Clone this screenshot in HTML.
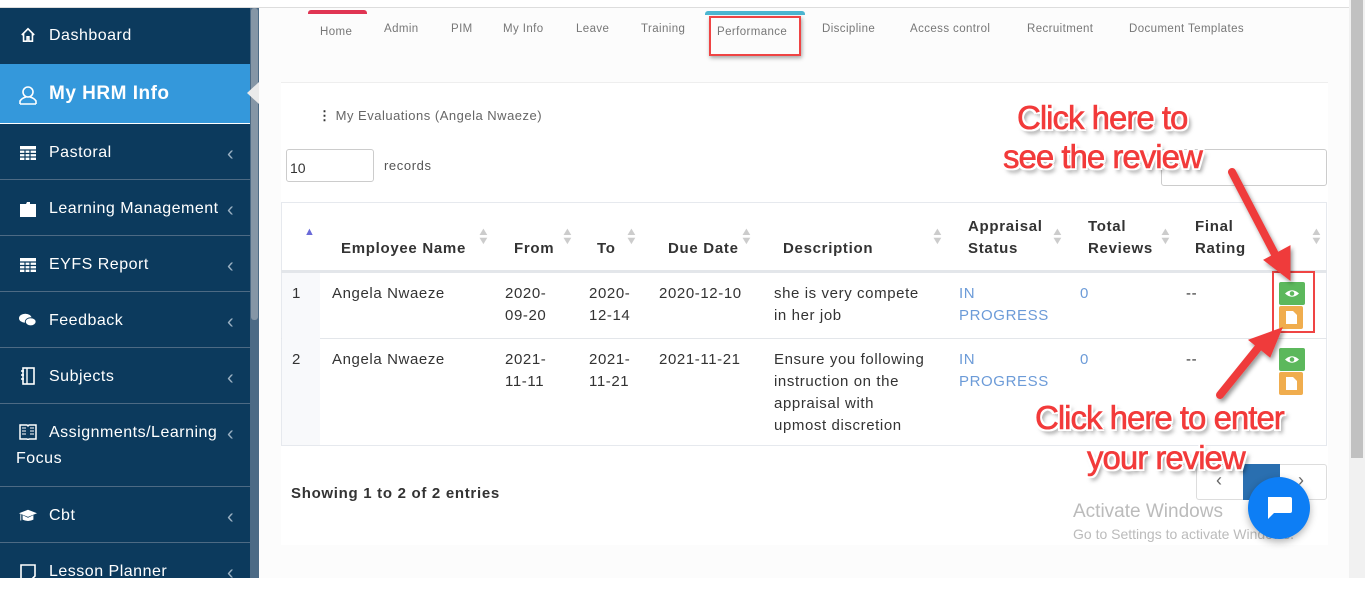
<!DOCTYPE html>
<html><head><meta charset="utf-8"><style>
*{box-sizing:border-box;margin:0;padding:0}
body{width:1365px;height:578px;overflow:hidden;background:#fff;font-family:"Liberation Sans",sans-serif;position:relative;color:#333}
.abs{position:absolute}
#sb{left:0;top:8px;width:259px;height:570px;background:#0c3a5d}
.it{position:absolute;left:0;width:250px;color:#fff;font-size:16px;letter-spacing:.5px;border-bottom:1px solid #4d6a84}
.it .ic{position:absolute;left:19px;width:18px;height:16px}
.it .t{position:absolute;left:49px}
.it .ch{position:absolute;left:227px;color:#9bb0c2;font-size:20px;line-height:16px}
.nav{font-size:11.5px;color:#777;letter-spacing:.4px;top:23px}
.h{font-weight:bold;font-size:15px;color:#333;letter-spacing:.7px;line-height:22px}
.c{font-size:15px;color:#333;letter-spacing:.6px;line-height:22px}
.sort{color:#ccc;font-size:11px;line-height:9px;transform:scaleX(1.2)}
.ann{font-size:33px;color:#f23a3a;font-family:"Liberation Sans",sans-serif;letter-spacing:-1px;-webkit-text-stroke:0.6px #f23a3a;text-shadow:-2px -2px 0 #fff,2px -2px 0 #fff,-2px 2px 0 #fff,2px 2px 0 #fff,0 2px 0 #fff,2px 0 0 #fff,-2px 0 0 #fff,0 -2px 0 #fff,3px 4px 4px rgba(0,0,0,.5);white-space:nowrap}
.blue{color:#6c9bd8}
</style></head><body>
<div class="abs" style="left:0;top:0;width:1350px;height:8px;background:#fff;border-bottom:1px solid #ddd"></div>
<div class="abs" style="left:259px;top:8px;width:1091px;height:570px;background:#fcfcfc"></div>
<div class="abs" style="left:1349px;top:0;width:16px;height:578px;background:#f1f1f1"></div>
<div class="abs" style="left:1351px;top:0;width:12px;height:458px;background:#c1c1c1"></div>

<div id="sb" class="abs">
<div class="it" style="top:0;height:56px;border:none"><svg class="ic" style="top:19px" viewBox="0 0 18 18"><path d="M2 9 L9 2 L16 9 M4 7 V16 H8 V11 H10 V16 H14 V7" fill="none" stroke="#fff" stroke-width="1.8"/></svg><span class="t" style="top:19px">Dashboard</span></div>
<div class="it" style="top:56px;height:60px;background:#3498db;border-bottom:1px solid #fff;width:250px"><svg class="ic" style="top:21px;height:20px" viewBox="0 0 18 20"><circle cx="9" cy="7" r="5" fill="none" stroke="#fff" stroke-width="1.6"/><path d="M1 19 V16 Q3 13 7 12 M17 19 V16 Q15 13 11 12 M1 19 H17" fill="none" stroke="#fff" stroke-width="1.6"/></svg><span class="t" style="top:19px;font-weight:bold;font-size:19px">My HRM Info</span></div>
<div class="it" style="top:116px;height:56px"><svg class="ic" style="top:21px" viewBox="0 0 18 16"><rect x="1" y="1" width="16" height="14" fill="#fff"/><path d="M1 5H17M1 8.5H17M1 12H17M6 5V15M11 5V15" stroke="#0c3a5d" stroke-width="1.2"/></svg><span class="t" style="top:20px">Pastoral</span><span class="ch" style="top:22px">‹</span></div>
<div class="it" style="top:172px;height:56px"><svg class="ic" style="top:21px" viewBox="0 0 18 16"><path d="M1 3H7L8 1H11V3H17V16H1Z" fill="#fff"/></svg><span class="t" style="top:20px">Learning Management</span><span class="ch" style="top:22px">‹</span></div>
<div class="it" style="top:228px;height:56px"><svg class="ic" style="top:21px" viewBox="0 0 18 16"><rect x="1" y="1" width="16" height="14" fill="#fff"/><path d="M1 5H17M1 8.5H17M1 12H17M6 5V15M11 5V15" stroke="#0c3a5d" stroke-width="1.2"/></svg><span class="t" style="top:20px">EYFS Report</span><span class="ch" style="top:22px">‹</span></div>
<div class="it" style="top:284px;height:56px"><svg class="ic" style="top:20px" viewBox="0 0 20 16"><ellipse cx="7" cy="6" rx="7" ry="5" fill="#fff"/><ellipse cx="13" cy="10" rx="6" ry="4.5" fill="#fff" stroke="#0c3a5d"/></svg><span class="t" style="top:20px">Feedback</span><span class="ch" style="top:22px">‹</span></div>
<div class="it" style="top:340px;height:56px"><svg class="ic" style="top:19px;height:18px" viewBox="0 0 18 18"><rect x="4" y="1" width="11" height="16" fill="none" stroke="#fff" stroke-width="1.6"/><path d="M8 1V17M2 4H5M2 8H5M2 12H5" stroke="#fff" stroke-width="1.4"/></svg><span class="t" style="top:20px">Subjects</span><span class="ch" style="top:22px">‹</span></div>
<div class="it" style="top:396px;height:83px"><svg class="ic" style="top:20px" viewBox="0 0 18 16"><path d="M1 1H8L9 2L10 1H17V15H10L9 16L8 15H1Z" fill="none" stroke="#fff" stroke-width="1.5"/><path d="M3 4H7M3 7H7M3 10H7M11 4H15M11 7H15M11 10H15" stroke="#fff"/></svg><span class="t" style="top:20px">Assignments/Learning</span><span class="ch" style="top:22px">‹</span><span class="abs" style="left:16px;top:46px">Focus</span></div>
<div class="it" style="top:479px;height:56px"><svg class="ic" style="top:21px" viewBox="0 0 20 16"><path d="M0 5L10 1L20 5L10 9Z" fill="#fff"/><path d="M4 7V12Q10 15 16 12V7L10 10Z" fill="#fff"/><path d="M2 6V13" stroke="#fff"/></svg><span class="t" style="top:20px">Cbt</span><span class="ch" style="top:22px">‹</span></div>
<div class="it" style="top:535px;height:56px;border:none"><svg class="ic" style="top:21px" viewBox="0 0 18 16"><path d="M2 1H16V12L12 16H2Z" fill="none" stroke="#fff" stroke-width="1.6"/></svg><span class="t" style="top:20px">Lesson Planner</span><span class="ch" style="top:22px">‹</span></div>
<div class="abs" style="left:250px;top:0;width:9px;height:570px;background:#4c6a85"></div>
<div class="abs" style="left:251px;top:0;width:7px;height:312px;background:#8596a6;border-radius:3px"></div>
<div class="abs" style="left:247px;top:74px;width:0;height:0;border-top:11px solid transparent;border-bottom:11px solid transparent;border-right:12px solid #eaeaea"></div>
</div>

<div class="abs" style="left:308px;top:10px;width:59px;height:4px;background:#e03553;border-radius:3px 3px 0 0"></div>
<div class="abs" style="left:705px;top:11px;width:100px;height:4px;background:#4cb6d1;border-radius:3px 3px 0 0"></div>
<span class="abs nav" style="left:320px;top:26px">Home</span>
<span class="abs nav" style="left:384px">Admin</span>
<span class="abs nav" style="left:451px">PIM</span>
<span class="abs nav" style="left:503px">My Info</span>
<span class="abs nav" style="left:576px">Leave</span>
<span class="abs nav" style="left:641px">Training</span>
<span class="abs nav" style="left:717px;top:26px">Performance</span>
<span class="abs nav" style="left:822px">Discipline</span>
<span class="abs nav" style="left:910px">Access control</span>
<span class="abs nav" style="left:1027px">Recruitment</span>
<span class="abs nav" style="left:1129px">Document Templates</span>
<div class="abs" style="left:709px;top:16px;width:92px;height:40px;border:2px solid #ef4444;box-shadow:1px 2px 4px rgba(0,0,0,.35)"></div>

<div class="abs" style="left:281px;top:82px;width:1047px;height:463px;background:#fff;border-top:1px solid #eee"></div>
<span class="abs" style="left:318px;top:108px;font-size:13px;color:#666;letter-spacing:.5px"><b style="color:#333">⋮</b> My Evaluations (Angela Nwaeze)</span>
<div class="abs" style="left:286px;top:149px;width:88px;height:33px;border:1px solid #ccc;border-radius:3px;font-size:14px;padding:10px 3px">10</div>
<span class="abs" style="left:384px;top:158px;font-size:13px;color:#555;letter-spacing:.6px">records</span>
<div class="abs" style="left:1161px;top:149px;width:166px;height:37px;border:1px solid #ccc;border-radius:3px"></div>

<div class="abs" style="left:281px;top:202px;width:1046px;height:244px;border:1px solid #e6e9ee"></div>
<div class="abs" style="left:281px;top:270px;width:1046px;height:3px;background:#e3e6ea"></div>
<div class="abs" style="left:281px;top:338px;width:1046px;height:1px;background:#e3e6ea"></div>
<div class="abs" style="left:282px;top:273px;width:38px;height:172px;background:#f8f9fb"></div>
<span class="abs" style="left:304px;top:226px;color:#6a6ad8;font-size:11px">▲</span>
<span class="abs h" style="left:341px;top:238px">Employee Name</span>
<span class="abs h" style="left:514px;top:238px">From</span>
<span class="abs h" style="left:597px;top:238px">To</span>
<span class="abs h" style="left:668px;top:238px">Due Date</span>
<span class="abs h" style="left:783px;top:238px">Description</span>
<span class="abs h" style="left:968px;top:216px">Appraisal<br>Status</span>
<span class="abs h" style="left:1088px;top:216px">Total<br>Reviews</span>
<span class="abs h" style="left:1195px;top:216px">Final<br>Rating</span>
<span class="abs sort" style="left:478px;top:228px">▲<br>▼</span>
<span class="abs sort" style="left:562px;top:228px">▲<br>▼</span>
<span class="abs sort" style="left:626px;top:228px">▲<br>▼</span>
<span class="abs sort" style="left:741px;top:228px">▲<br>▼</span>
<span class="abs sort" style="left:932px;top:228px">▲<br>▼</span>
<span class="abs sort" style="left:1052px;top:228px">▲<br>▼</span>
<span class="abs sort" style="left:1160px;top:228px">▲<br>▼</span>
<span class="abs sort" style="left:1311px;top:228px">▲<br>▼</span>

<span class="abs c" style="left:292px;top:283px">1</span>
<span class="abs c" style="left:332px;top:283px">Angela Nwaeze</span>
<span class="abs c" style="left:505px;top:283px">2020-<br>09-20</span>
<span class="abs c" style="left:589px;top:283px">2020-<br>12-14</span>
<span class="abs c" style="left:659px;top:283px">2020-12-10</span>
<span class="abs c" style="left:774px;top:283px">she is very compete<br>in her job</span>
<span class="abs c blue" style="left:959px;top:283px">IN<br>PROGRESS</span>
<span class="abs c blue" style="left:1080px;top:283px">0</span>
<span class="abs c" style="left:1186px;top:283px">--</span>

<span class="abs c" style="left:292px;top:349px">2</span>
<span class="abs c" style="left:332px;top:349px">Angela Nwaeze</span>
<span class="abs c" style="left:505px;top:349px">2021-<br>11-11</span>
<span class="abs c" style="left:589px;top:349px">2021-<br>11-21</span>
<span class="abs c" style="left:659px;top:349px">2021-11-21</span>
<span class="abs c" style="left:774px;top:349px">Ensure you following<br>instruction on the<br>appraisal with<br>upmost discretion</span>
<span class="abs c blue" style="left:959px;top:349px">IN<br>PROGRESS</span>
<span class="abs c blue" style="left:1080px;top:349px">0</span>
<span class="abs c" style="left:1186px;top:349px">--</span>

<div class="abs" style="left:1279px;top:282px;width:26px;height:23px;background:#5cb85c;border-radius:2px"><svg width="26" height="23" viewBox="0 0 26 23"><path d="M6 11.5Q13 5 20 11.5Q13 18 6 11.5Z" fill="#fff"/><circle cx="13" cy="11.5" r="2.3" fill="#5cb85c"/></svg></div>
<div class="abs" style="left:1279px;top:306px;width:24px;height:23px;background:#f0ad4e;border-radius:2px"><svg width="24" height="23" viewBox="0 0 24 23"><path d="M7 5H14L18 9V18H7Z" fill="#fff"/></svg></div>
<div class="abs" style="left:1272px;top:271px;width:43px;height:62px;border:2px solid #ef4444"></div>
<div class="abs" style="left:1279px;top:348px;width:26px;height:23px;background:#5cb85c;border-radius:2px"><svg width="26" height="23" viewBox="0 0 26 23"><path d="M6 11.5Q13 5 20 11.5Q13 18 6 11.5Z" fill="#fff"/><circle cx="13" cy="11.5" r="2.3" fill="#5cb85c"/></svg></div>
<div class="abs" style="left:1279px;top:372px;width:24px;height:23px;background:#f0ad4e;border-radius:2px"><svg width="24" height="23" viewBox="0 0 24 23"><path d="M7 5H14L18 9V18H7Z" fill="#fff"/></svg></div>

<span class="abs" style="left:291px;top:485px;font-weight:bold;font-size:15px;letter-spacing:.7px;color:#333">Showing 1 to 2 of 2 entries</span>
<div class="abs" style="left:1196px;top:464px;width:131px;height:36px;border:1px solid #ddd;border-radius:3px"></div>
<div class="abs" style="left:1243px;top:464px;width:37px;height:36px;background:#2a6fb0"></div>
<span class="abs" style="left:1216px;top:470px;color:#666;font-size:18px">‹</span>
<span class="abs" style="left:1298px;top:470px;color:#666;font-size:18px">›</span>
<span class="abs" style="left:1073px;top:501px;font-size:19px;color:#bbb">Activate Windows</span>
<span class="abs" style="left:1073px;top:526px;font-size:14px;color:#bbb">Go to Settings to activate Windows.</span>
<div class="abs" style="left:1248px;top:477px;width:62px;height:62px;border-radius:50%;background:#0d7ef5;box-shadow:0 3px 8px rgba(0,0,0,.3)"><svg width="62" height="62" viewBox="0 0 62 62"><path d="M20 20H42Q44 20 44 22V34Q44 36 42 36H26L20 42Z" fill="#fff"/></svg></div>

<svg class="abs" style="left:0;top:0" width="1365" height="578">
<defs><filter id="s"><feDropShadow dx="2" dy="3" stdDeviation="2" flood-opacity=".4"/></filter></defs>
<g filter="url(#s)" fill="#ef3b3b" stroke="#ef3b3b">
<path d="M1232 172 L1278 260" stroke-width="8" stroke-linecap="round"/>
<path d="M1264 260 L1290 280 L1290 246 Z"/>
<path d="M1220 395 L1262 343" stroke-width="8" stroke-linecap="round"/>
<path d="M1249 340 L1282 328 L1270 357 Z"/>
</g></svg>
<span class="abs ann" style="left:1017px;top:99px">Click here to</span>
<span class="abs ann" style="left:1003px;top:138px">see the review</span>
<span class="abs ann" style="left:1035px;top:399px">Click here to enter</span>
<span class="abs ann" style="left:1087px;top:439px">your review</span>
</body></html>
